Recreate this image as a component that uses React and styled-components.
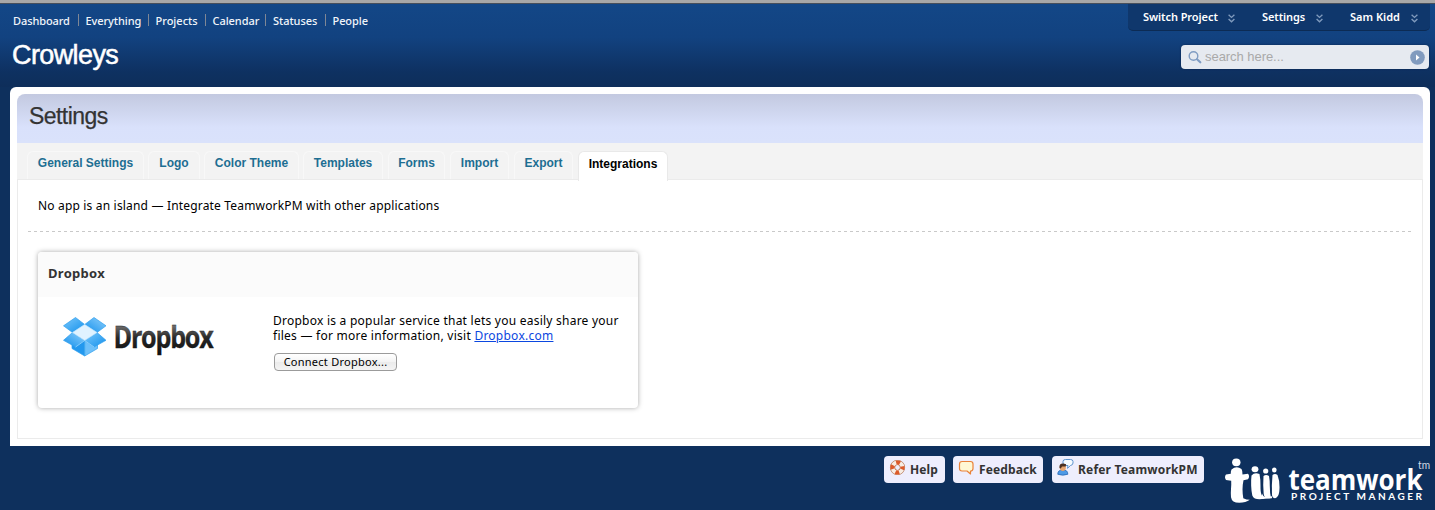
import React from "react";
import styled, { createGlobalStyle } from "styled-components";

const lucida = '"Lucida Grande", "Noto Sans", "Open Sans", sans-serif';
const helvetica = '"Liberation Sans", Arial, sans-serif';

const GlobalStyle = createGlobalStyle`
  * { box-sizing: border-box; }
  body { margin: 0; background: #0e305d; font-family: ${lucida}; color: #000; overflow: hidden; }
`;

const Page = styled.div`
  width: 1435px;
  height: 510px;
  overflow: hidden;
  display: flex;
  flex-direction: column;
  background: #0e305d;
`;

const Strip = styled.div`
  flex: none;
  height: 4px;
  background: #a8a8a8;
  border-bottom: 1px solid #474f5c;
`;

const Header = styled.header`
  flex: none;
  height: 83px;
  display: flex;
  justify-content: space-between;
  padding: 0 5px 0 12px;
  background: linear-gradient(#134787 0%, #124280 40%, #0e3161 82%, #0e2e5a 100%);
`;

const HeaderLeft = styled.div`
  display: flex;
  flex-direction: column;
`;

const Nav = styled.nav`
  display: flex;
  height: 28px;
  padding-top: 9px;
`;

const NavItem = styled.a`
  width: ${(p) => p.$w}px;
  height: 14px;
  padding-left: 1px;
  font-size: 11px;
  line-height: 15px;
  font-weight: 500;
  letter-spacing: ${(p) => p.$ls}px;
  color: #f1f5fa;
  white-space: nowrap;
`;

const NavDivider = styled.span`
  width: 1px;
  height: 12px;
  margin: 1px 6px 0 0;
  background: #7f8795;
`;

const Company = styled.h1`
  margin: 6px 0 0;
  font: 400 27px/34px ${helvetica};
  letter-spacing: -0.6px;
  color: #fff;
  -webkit-text-stroke: 0.5px #fff;
`;

const HeaderRight = styled.div`
  display: flex;
  flex-direction: column;
  align-items: flex-end;
`;

const UserBar = styled.div`
  width: 302px;
  height: 27px;
  display: flex;
  padding-left: 15px;
  background: #0f376c;
  border-bottom: 1px solid #0c2b54;
  border-radius: 0 0 5px 5px;
`;

const UserItem = styled.div`
  width: ${(p) => p.$w}px;
  display: flex;
  justify-content: space-between;
  font-size: 11px;
  line-height: 25px;
  font-weight: 600;
  letter-spacing: ${(p) => p.$ls}px;
  color: #fff;
  margin-right: ${(p) => p.$gap}px;
  white-space: nowrap;

  svg { margin-top: 10px; }
`;

const Search = styled.div`
  width: 248px;
  height: 24px;
  margin: 14px 1px 0 0;
  display: flex;
  align-items: center;
  padding: 0 4px 0 7px;
  border-radius: 4px;
  background: #e6eaf0;
  box-shadow: 0 0 2px #08244a;
  font: 13px/24px ${helvetica};
  color: #a9a9a9;

  span { flex: 1; margin-left: 3px; letter-spacing: -0.05px; }
`;

const Panel = styled.main`
  flex: none;
  width: 1420px;
  height: 359px;
  margin-left: 10px;
  padding: 7px;
  background: #fff;
  border-radius: 6px 6px 0 0;
`;

const Inner = styled.section`
  height: 345px;
  display: flex;
  flex-direction: column;
  border-bottom: 1px solid #ebebeb;
`;

const TitleBar = styled.div`
  flex: none;
  height: 49px;
  padding-left: 12px;
  border-radius: 8px 8px 0 0;
  background: linear-gradient(#c3c9e0 0%, #d9e1fb 68%, #dae2fb 100%);
  font: 400 23px/44px ${helvetica};
  letter-spacing: -0.55px;
  color: #333;
  -webkit-text-stroke: 0.25px #333;
`;

const Tabs = styled.div`
  flex: none;
  height: 37px;
  display: flex;
  padding: 8px 0 0 10px;
  background: #f3f3f3;
  border-bottom: 1px solid #ebebeb;
`;

const Tab = styled.a`
  width: ${(p) => p.$w}px;
  height: 28px;
  margin-right: ${(p) => p.$gap}px;
  border: 1px solid #f8f8f8;
  border-bottom: 0;
  border-radius: 6px 6px 0 0;
  font: 700 12px/23px ${helvetica};
  text-align: center;
  color: #1d6e92;
  white-space: nowrap;
`;

const ActiveTab = styled(Tab)`
  height: 30px;
  background: #fff;
  border-color: #e9e9e9;
  color: #000;
  line-height: 24px;
`;

const Body = styled.div`
  flex: 1;
  border: solid #ebebeb;
  border-width: 0 1px;
  padding: 0 10px;
`;

const Intro = styled.p`
  margin: 0;
  height: 52px;
  padding: 17px 0 0 10px;
  font-size: 12px;
  line-height: 17px;
  letter-spacing: 0.175px;
  background: repeating-linear-gradient(90deg, #c9c9c9 0 3px, transparent 3px 6px) 0 100% / 1384px 1px no-repeat;
`;

const Card = styled.article`
  width: 600px;
  height: 156px;
  margin: 20px 0 0 10px;
  border-radius: 4px;
  background: #fff;
  box-shadow: 0 0 5px rgba(0, 0, 0, 0.34);
`;

const CardTitle = styled.h2`
  margin: 0;
  height: 45px;
  padding-left: 10px;
  border-radius: 4px 4px 0 0;
  background: #fbfbfb;
  font-size: 13px;
  line-height: 43px;
  font-weight: 700;
  letter-spacing: 0.3px;
  color: #333;
`;

const CardBody = styled.div`
  display: flex;
  padding: 17px 0 0 24px;
`;

const CardText = styled.div`
  margin: -1px 0 0 56px;
  font-size: 12px;
  line-height: 15px;
  white-space: nowrap;
`;

const Line = styled.div`
  letter-spacing: ${(p) => p.$ls}px;
  a { color: #0b47e0; text-decoration: underline; }
`;

const Connect = styled.button`
  display: block;
  width: 123px;
  height: 18px;
  margin: 10px 0 0 1px;
  padding: 0;
  border: 1px solid #9b9b9b;
  border-radius: 4px;
  background: linear-gradient(#fff, #f3f3f3 50%, #ebebeb 51%, #f4f4f4);
  font: 11px/14px ${lucida};
  letter-spacing: 0.25px;
  color: #000;
`;

const Footer = styled.footer`
  flex: 1;
  display: flex;
  padding: 10px 0 0 884px;
`;

const FooterButton = styled.a`
  width: ${(p) => p.$w}px;
  height: 27px;
  margin-right: ${(p) => p.$gap}px;
  display: flex;
  padding: 3px 0 0 5px;
  border-radius: 4px;
  background: #eeeefd;
  font-size: 12px;
  line-height: 21px;
  font-weight: 700;
  letter-spacing: ${(p) => p.$ls}px;
  color: #333;
  white-space: nowrap;

  span { margin-left: 4px; }
`;

const Brand = styled.svg`
  display: block;
  width: 215px;
  height: 54px;
`;

const DropboxMark = styled.svg`
  display: block;
  width: 155px;
  height: 56px;
  overflow: visible;
`;

function Chevrons() {
  return (
    <svg width="7" height="10" viewBox="0 0 7 10" fill="none" stroke="#7f9abd" strokeWidth="1.4">
      <path d="M0.6 0.8 3.5 3.4 6.4 0.8M0.6 5 3.5 7.8 6.4 5" />
    </svg>
  );
}

function DropboxLogo() {
  return (
    <DropboxMark viewBox="0 0 155 56">
      <defs>
        <linearGradient id="dbA" x1="0" y1="0" x2="1" y2="1">
          <stop offset="0" stopColor="#7ac8fb" />
          <stop offset="1" stopColor="#1390ec" />
        </linearGradient>
        <linearGradient id="dbB" x1="1" y1="0" x2="0" y2="1">
          <stop offset="0" stopColor="#8fd0fc" />
          <stop offset="1" stopColor="#1390ec" />
        </linearGradient>
        <linearGradient id="dbC" x1="0" y1="0" x2="0" y2="1">
          <stop offset="0.2" stopColor="#7a7a7a" />
          <stop offset="0.55" stopColor="#262626" />
          <stop offset="1" stopColor="#0c0c0c" />
        </linearGradient>
      </defs>
      <g stroke="#2f9fee" strokeWidth="0.7" strokeLinejoin="round">
        <path d="M10 28 22.700 20V42L10 34.500Z" fill="#2398ee" />
        <path d="M35.500 28 22.700 20V42L35.500 34.500Z" fill="#6dc0fa" />
        <path d="M13.500 3.500 22.700 10.500 10.500 18.500 1.500 11.800Z" fill="url(#dbA)" />
        <path d="M32 3.500 22.700 10.500 35 18.500 44 11.800Z" fill="url(#dbB)" />
        <path d="M10.500 18.500 22.700 26.500 13.500 33 1.500 26.300Z" fill="url(#dbB)" />
        <path d="M35 18.500 22.700 26.500 32 33 44 26.300Z" fill="url(#dbA)" />
        <path d="M22.700 10.500 35 18.500 22.700 26.500 10.500 18.500Z" fill="#e0f2ff" stroke="#b9e2fd" />
      </g>
      <path d="M13.500 33 22.700 26.500 32 33" fill="none" stroke="#a9dcff" strokeWidth="0.7" />
      <text x="51.500" y="34" fontFamily="Open Sans, sans-serif" fontWeight="700" fontSize="31" letterSpacing="-1.500" textLength="99" lengthAdjust="spacingAndGlyphs" fill="url(#dbC)" stroke="#1b1b1b" strokeWidth="0.3">Dropbox</text>
    </DropboxMark>
  );
}

function LifebuoyIcon() {
  return (
    <svg width="17" height="17" viewBox="0 0 17 17">
      <circle cx="8.500" cy="8.500" r="5" fill="none" stroke="#b06a43" strokeWidth="5.200" />
      <circle cx="8.500" cy="8.500" r="5" fill="none" stroke="#f7ede4" strokeWidth="4" />
      <circle cx="8.500" cy="8.500" r="5" fill="none" stroke="#dc5a2a" strokeWidth="4.200" strokeDasharray="3.927 3.927" strokeDashoffset="1.960" />
    </svg>
  );
}

function BubbleIcon() {
  return (
    <svg width="17" height="17" viewBox="0 0 17 17">
      <path d="M4 2.500h8.500q2.500 0 2.500 2.500v4.500q0 2.500-2.500 2.500v3L9 12H4Q1.500 12 1.500 9.500V5Q1.500 2.500 4 2.500Z" fill="#fff8d4" stroke="#e9823a" strokeWidth="1.200" strokeLinejoin="round" />
    </svg>
  );
}

function PersonIcon() {
  return (
    <svg width="17" height="17" viewBox="0 0 17 17">
      <path d="M8.500.5h5q2.500 0 2.500 2v1.500q0 2-2.500 2.500L10.500 9.300 11 6.500H8.500q-2.500-.5-2.500-2.500V2.500q0-2 2.500-2Z" fill="#f5fbff" stroke="#5d93cf" />
      <path d="M.8 15.300c0-3.300 1.700-4.300 5-4.300s5 1 5 4.300q-5 1.700-10 0Z" fill="#4e9ae6" stroke="#2768b8" strokeWidth=".8" />
      <circle cx="5.800" cy="8.800" r="3.100" fill="#e7a56f" />
      <path d="M2.500 9C1.800 4.600 5 3.900 9.100 5.200L8.800 7.500H5L3.800 9.500Z" fill="#4b3021" />
    </svg>
  );
}

function TeamworkLogo() {
  return (
    <Brand viewBox="0 0 215 54" fill="#fff">
      <ellipse cx="16.300" cy="6.300" rx="4.200" ry="3.900" />
      <path d="M11.500 13.500Q16.500 9.500 21.500 13q1 1.500 1 5.500l5.500-.7q2.200 2.500 0 5.500l-4.500 1c-1.300 6-1.200 12-.2 18q3 1.500 6.500 1.500-4 3-10.500 3-7.500 0-8.300-5.500c-.6-6 .6-11 .2-16.500L6 24Q4 21 6 18.500l4.800-.8q-.2-2.500.7-4.200Z" />
      <ellipse cx="35" cy="13.200" rx="3.400" ry="3" />
      <ellipse cx="45.700" cy="15" rx="2.600" ry="2.600" />
      <ellipse cx="54.300" cy="14" rx="2.300" ry="2.600" />
      <path d="M31.500 19.500q3-3.500 8-1.500 1.200 6 1 12c0 6 .5 10 4 12.500-5 1.500-11 1-12.200-3-1.300-6-1.500-14-.8-20Z" />
      <path d="M43.500 20q2.500-2 5.500 0 .8 4 .8 10 0 7 1.200 12-6.500 1.500-7.300-4-.8-10-.2-18Z" />
      <path d="M52.500 19q2.500-2 5 0 2 5 2 12c0 6-.8 10-4.500 11.300q-2.500 0-3-3.300-.5-10 .5-20Z" />
      <path d="M42 37.500q1.500 4 5 3.500l5-.8v2l-10 .8Z" />
      <g fontFamily="Lato, sans-serif">
        <text x="68.500" y="33.500" fontFamily="Open Sans, sans-serif" fontWeight="700" fontSize="28" textLength="134" lengthAdjust="spacingAndGlyphs">teamwork</text>
        <text x="71" y="44" fontWeight="700" fontSize="10" textLength="131" lengthAdjust="spacing">PROJECT MANAGER</text>
        <text x="198" y="13" fontSize="11.500" fill="#d3dbe6" textLength="12" lengthAdjust="spacingAndGlyphs">tm</text>
      </g>
    </Brand>
  );
}

const navItems = [
  ["Dashboard", 65.5, -0.1],
  ["Everything", 63, -0.08],
  ["Projects", 50, 0],
  ["Calendar", 53.5, -0.05],
  ["Statuses", 52.5, -0.05],
  ["People", 45, -0.08],
];

const tabs = [
  ["General Settings", 117, 4],
  ["Logo", 52, 4],
  ["Color Theme", 95, 4],
  ["Templates", 80, 5],
  ["Forms", 57, 5],
  ["Import", 59, 5],
  ["Export", 59, 5],
];

export default function App() {
  return (
    <Page>
      <GlobalStyle />
      <Strip />
      <Header>
        <HeaderLeft>
          <Nav>
            {navItems.map(([label, w, ls], i) => (
              <React.Fragment key={label}>
                {i > 0 && <NavDivider />}
                <NavItem $w={w} $ls={ls}>{label}</NavItem>
              </React.Fragment>
            ))}
          </Nav>
          <Company>Crowleys</Company>
        </HeaderLeft>
        <HeaderRight>
          <UserBar>
            <UserItem $w={92} $gap={27} $ls={-0.07}>Switch Project<Chevrons /></UserItem>
            <UserItem $w={61} $gap={27} $ls={-0.1}>Settings<Chevrons /></UserItem>
            <UserItem $w={68} $gap={0} $ls={0}>Sam Kidd<Chevrons /></UserItem>
          </UserBar>
          <Search>
            <svg width="14" height="14" viewBox="0 0 14 14" fill="none" stroke="#7f9cc2">
              <circle cx="5.500" cy="6" r="4.300" strokeWidth="1.400" />
              <path d="m9 9.300 3.300 3" strokeWidth="2.200" strokeLinecap="round" />
            </svg>
            <span>search here...</span>
            <svg width="15" height="15" viewBox="0 0 15 15">
              <circle cx="7.500" cy="7.500" r="7.300" fill="#819bbe" />
              <path d="M6 4.500 9.500 7.500 6 10.500Z" fill="#fff" />
            </svg>
          </Search>
        </HeaderRight>
      </Header>
      <Panel>
        <Inner>
          <TitleBar>Settings</TitleBar>
          <Tabs>
            {tabs.map(([label, w, gap]) => <Tab key={label} $w={w} $gap={gap}>{label}</Tab>)}
            <ActiveTab $w={90} $gap={0}>Integrations</ActiveTab>
          </Tabs>
          <Body>
            <Intro>No app is an island — Integrate TeamworkPM with other applications</Intro>
            <Card>
              <CardTitle>Dropbox</CardTitle>
              <CardBody>
                <DropboxLogo />
                <CardText>
                  <Line $ls={0.24}>Dropbox is a popular service that lets you easily share your</Line>
                  <Line $ls={0.25}>files — for more information, visit <a>Dropbox.com</a></Line>
                  <Connect>Connect Dropbox...</Connect>
                </CardText>
              </CardBody>
            </Card>
          </Body>
        </Inner>
      </Panel>
      <Footer>
        <FooterButton $w={61} $gap={8} $ls={0.1}><LifebuoyIcon /><span>Help</span></FooterButton>
        <FooterButton $w={90} $gap={9} $ls={0.12}><BubbleIcon /><span>Feedback</span></FooterButton>
        <FooterButton $w={152} $gap={16} $ls={0.18}><PersonIcon /><span>Refer TeamworkPM</span></FooterButton>
        <TeamworkLogo />
      </Footer>
    </Page>
  );
}
